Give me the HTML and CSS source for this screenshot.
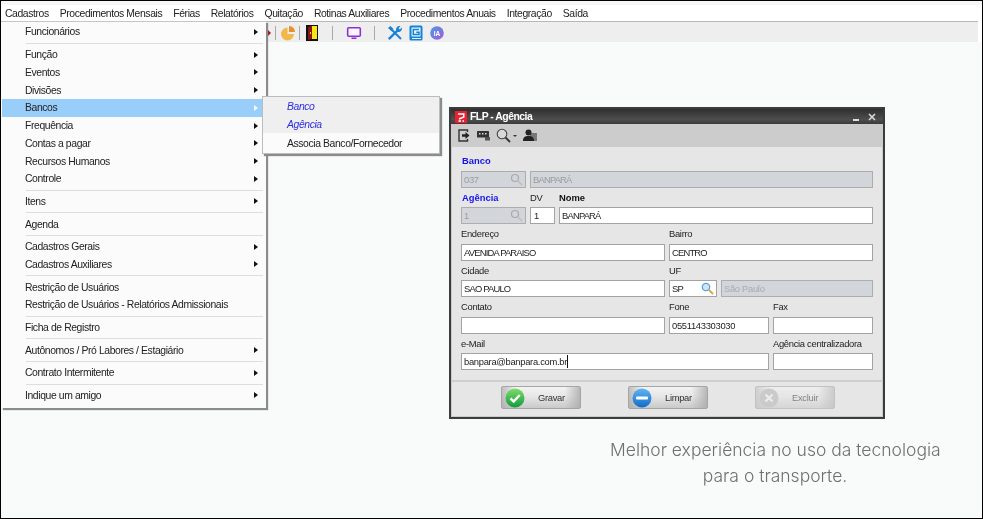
FILE: index.html
```html
<!DOCTYPE html>
<html lang="pt-BR">
<head>
<meta charset="utf-8">
<title>FLP - Agência</title>
<link rel="stylesheet" href="styles.css">
</head>
<body>
<div class="frame">
  <nav class="menubar">
    <span class="mb-item mb-open">Cadastros</span>
    <span class="mb-item">Procedimentos Mensais</span>
    <span class="mb-item">Férias</span>
    <span class="mb-item">Relatórios</span>
    <span class="mb-item">Quitação</span>
    <span class="mb-item">Rotinas Auxiliares</span>
    <span class="mb-item">Procedimentos Anuais</span>
    <span class="mb-item">Integração</span>
    <span class="mb-item">Saída</span>
  </nav>
  <div class="toolbar">
    <svg class="tb tb-arrow" width="6" height="10" viewBox="0 0 6 10"><path d="M0 0l5 5-5 5z" fill="#a01818"/></svg>
    <span class="tb-sep s1"></span>
    <svg class="tb tb-pie" width="16" height="16" viewBox="0 0 16 16"><path d="M7.500 2.500a6.500 6.500 0 1 0 6.500 6.500H7.500z" fill="#f2b84b"/><path d="M9 1a6 6 0 0 1 6 6H9z" fill="#e8912c"/></svg>
    <span class="tb-sep s2"></span>
    <svg class="tb tb-door" width="12" height="16" viewBox="0 0 12 16"><rect width="12" height="16" fill="#111"/><rect x="5" y="1" width="6" height="13" fill="#f7e716"/><path d="M2 2l4-1v13l-4 1z" fill="#8a1616"/><rect x="4" y="7" width="1" height="2" fill="#f7e716"/></svg>
    <span class="tb-sep s3"></span>
    <svg class="tb tb-mon" width="16" height="16" viewBox="0 0 16 16"><rect x="1.700" y="2.700" width="12.600" height="8.600" rx="1" fill="#fbf6ff" stroke="#8e2fd6" stroke-width="1.600"/><rect x="5.500" y="12.500" width="5" height="1.500" fill="#8e2fd6"/></svg>
    <span class="tb-sep s4"></span>
    <svg class="tb tb-tools" width="16" height="16" viewBox="0 0 16 16"><path d="M1.800 14.200L11 5" stroke="#1683d8" stroke-width="2.400" fill="none"/><path d="M14 14L5 5" stroke="#1683d8" stroke-width="2" fill="none"/><path d="M9.200 5.500a3.400 3.400 0 0 1 4.300-4.300l-2 2 1.300 1.300 2-2a3.400 3.400 0 0 1-4.300 4.300zM1 3l2.500-2 3 3-2 2.200z" fill="#1683d8"/></svg>
    <svg class="tb tb-g" width="14" height="16" viewBox="0 0 14 16"><rect x=".5" y=".5" width="13" height="15" rx="1.500" fill="#1483d6"/><rect x="2.500" y="2.500" width="9" height="9" fill="#eaf6fd"/><path d="M10 4.500H4.300v5H10V7.200H7.300" fill="none" stroke="#1483d6" stroke-width="1.500"/><rect x="3" y="13" width="9" height="1" fill="#eaf6fd"/></svg>
    <svg class="tb tb-ia" width="14" height="14" viewBox="0 0 14 14"><defs><linearGradient id="iag" x1="0" y1="0" x2="1" y2="1"><stop offset="0" stop-color="#4a9be0"/><stop offset="1" stop-color="#a35adf"/></linearGradient></defs><circle cx="7" cy="7" r="6.800" fill="url(#iag)"/><text x="7" y="9.700" text-anchor="middle" class="ia-text">IA</text></svg>
  </div>
  <main class="desktop">
    <p class="tagline">Melhor experiência no uso da tecnologia<br>para o transporte.</p>
  </main>

  <div class="menu">
    <div class="mi"><span>Funcionários</span><i class="caret"></i></div>
    <hr class="msep">
    <div class="mi"><span>Função</span><i class="caret"></i></div>
    <div class="mi"><span>Eventos</span><i class="caret"></i></div>
    <div class="mi"><span>Divisões</span><i class="caret"></i></div>
    <div class="mi mi-sel"><span>Bancos</span><i class="caret caret-w"></i></div>
    <div class="mi"><span>Frequência</span><i class="caret"></i></div>
    <div class="mi"><span>Contas a pagar</span><i class="caret"></i></div>
    <div class="mi"><span>Recursos Humanos</span><i class="caret"></i></div>
    <div class="mi"><span>Controle</span><i class="caret"></i></div>
    <hr class="msep">
    <div class="mi"><span>Itens</span><i class="caret"></i></div>
    <hr class="msep">
    <div class="mi"><span>Agenda</span></div>
    <hr class="msep">
    <div class="mi"><span>Cadastros Gerais</span><i class="caret"></i></div>
    <div class="mi"><span>Cadastros Auxiliares</span><i class="caret"></i></div>
    <hr class="msep">
    <div class="mi"><span>Restrição de Usuários</span></div>
    <div class="mi"><span>Restrição de Usuários - Relatórios Admissionais</span></div>
    <hr class="msep">
    <div class="mi"><span>Ficha de Registro</span></div>
    <hr class="msep">
    <div class="mi"><span>Autônomos / Pró Labores / Estagiário</span><i class="caret"></i></div>
    <hr class="msep">
    <div class="mi"><span>Contrato Intermitente</span><i class="caret"></i></div>
    <hr class="msep">
    <div class="mi"><span>Indique um amigo</span><i class="caret"></i></div>
  </div>

  <div class="submenu">
    <div class="si si-top si-em">Banco</div>
    <div class="si si-top si-em">Agência</div>
    <div class="si si-last">Associa Banco/Fornecedor</div>
  </div>

  <section class="dialog">
    <header class="dlg-title">
      <svg class="dlg-logo" width="12" height="12" viewBox="0 0 12 12"><rect width="12" height="12" fill="#e8212f"/><path d="M3 3h5.800v3L4 8" fill="none" stroke="#fff" stroke-width="1.500"/><path d="M3.500 10h2.500M7.500 10H9" fill="none" stroke="#fff" stroke-width="1.400"/></svg>
      <span class="dlg-name">FLP - Agência</span>
      <span class="dlg-min"></span>
      <svg class="dlg-x" width="8" height="8" viewBox="0 0 8 8"><path d="M1 1l6 6M7 1L1 7" stroke="#ddd" stroke-width="1.500"/></svg>
    </header>
    <div class="dlg-tools">
      <svg width="12" height="13" viewBox="0 0 12 13"><path d="M9.500 3V1H1v11h8.500v-2" fill="none" stroke="#333" stroke-width="1.400"/><path d="M4 5.300h3.500V3l4 3.500-4 3.500V7.700H4z" fill="#222"/></svg>
      <svg class="dt-card" width="13" height="11" viewBox="0 0 13 11"><rect y="1" width="12" height="6.500" rx=".5" fill="#333"/><rect x="2" y="3" width="1.500" height="1.500" fill="#ddd"/><rect x="5" y="3" width="1.500" height="1.500" fill="#ddd"/><rect x="8" y="3" width="1.500" height="1.500" fill="#ddd"/><rect x="8" y="7" width="5" height="3.500" fill="#555"/></svg>
      <svg class="dt-lens" width="15" height="15" viewBox="0 0 15 15"><circle cx="6" cy="6" r="4.800" fill="#d8d8d8" stroke="#444" stroke-width="1.100"/><path d="M9.500 9.500l4.500 4.500" stroke="#333" stroke-width="1.800"/></svg>
      <i class="dt-drop"></i>
      <svg class="dt-user" width="14" height="13" viewBox="0 0 14 13"><rect x="7" y="4" width="7" height="8" fill="#777"/><circle cx="5.500" cy="3.500" r="3" fill="#222"/><path d="M0 12c0-4 2-5 5.500-5S11 8 11 12z" fill="#222"/></svg>
    </div>
    <div class="dlg-form">
      <div class="row">
        <div class="field w-code"><label class="lbl lbl-key">Banco</label><div class="inp inp-off"><span>037</span><svg class="lens" width="13" height="13" viewBox="0 0 13 13"><circle cx="5" cy="5" r="3.500" fill="none" stroke="#a9a9a9" stroke-width="1.200"/><path d="M8 8l4 4" stroke="#bbb" stroke-width="1.300"/></svg></div></div>
        <div class="field w-fill"><label class="lbl">&nbsp;</label><div class="inp inp-off"><span class="cap">BANPARÁ</span></div></div>
      </div>
      <div class="row">
        <div class="field w-code"><label class="lbl lbl-key">Agência</label><div class="inp inp-off"><span>1</span><svg class="lens" width="13" height="13" viewBox="0 0 13 13"><circle cx="5" cy="5" r="3.500" fill="none" stroke="#a9a9a9" stroke-width="1.200"/><path d="M8 8l4 4" stroke="#bbb" stroke-width="1.300"/></svg></div></div>
        <div class="field w-dv"><label class="lbl">DV</label><div class="inp inp-c"><span>1</span></div></div>
        <div class="field w-nome"><label class="lbl lbl-req">Nome</label><div class="inp"><span class="cap">BANPARÁ</span></div></div>
      </div>
      <div class="row">
        <div class="field w-half"><label class="lbl">Endereço</label><div class="inp"><span class="cap">AVENIDA PARAISO</span></div></div>
        <div class="field w-fill"><label class="lbl">Bairro</label><div class="inp"><span class="cap">CENTRO</span></div></div>
      </div>
      <div class="row">
        <div class="field w-half"><label class="lbl">Cidade</label><div class="inp"><span class="cap">SAO PAULO</span></div></div>
        <div class="field w-uf"><label class="lbl">UF</label><div class="inp"><span class="cap">SP</span><svg class="lens" width="13" height="13" viewBox="0 0 13 13"><circle cx="5" cy="5" r="3.700" fill="#cfe6fa" stroke="#5fa0dc" stroke-width="1.300"/><path d="M8 8l4 4" stroke="#d9a641" stroke-width="1.800"/></svg></div></div>
        <div class="field w-fill"><label class="lbl">&nbsp;</label><div class="inp inp-off inp-soft"><span>São Paulo</span></div></div>
      </div>
      <div class="row">
        <div class="field w-half"><label class="lbl">Contato</label><div class="inp"></div></div>
        <div class="field w-fone"><label class="lbl">Fone</label><div class="inp"><span>0551143303030</span></div></div>
        <div class="field w-fill"><label class="lbl">Fax</label><div class="inp"></div></div>
      </div>
      <div class="row">
        <div class="field w-mail"><label class="lbl">e-Mail</label><div class="inp"><span class="caret-text">banpara@banpara.com.br</span></div></div>
        <div class="field w-fill"><label class="lbl">Agência centralizadora</label><div class="inp"></div></div>
      </div>
    </div>
    <footer class="dlg-foot">
      <div class="btn">
        <svg class="btn-ic" width="20" height="20" viewBox="0 0 20 20"><defs><linearGradient id="gr" x1="0" y1="0" x2="0" y2="1"><stop offset="0" stop-color="#7fdd6a"/><stop offset="1" stop-color="#109c3c"/></linearGradient></defs><circle cx="10" cy="10" r="9.500" fill="url(#gr)"/><path d="M5.500 10.500l3.200 3 6-6.500" fill="none" stroke="#fff" stroke-width="2.400"/></svg>
        <span class="btn-t">Gravar</span>
      </div>
      <div class="btn">
        <svg class="btn-ic" width="20" height="20" viewBox="0 0 20 20"><defs><linearGradient id="bl" x1="0" y1="0" x2="0" y2="1"><stop offset="0" stop-color="#62b4f2"/><stop offset="1" stop-color="#0f6cc9"/></linearGradient></defs><circle cx="10" cy="10" r="9.500" fill="url(#bl)"/><rect x="4" y="8.500" width="12" height="3" rx="1" fill="#fff"/></svg>
        <span class="btn-t">Limpar</span>
      </div>
      <div class="btn btn-off">
        <svg class="btn-ic" width="20" height="20" viewBox="0 0 20 20"><circle cx="10" cy="10" r="9.500" fill="#b4b4b4"/><path d="M6.500 6.500l7 7M13.500 6.500l-7 7" stroke="#f0f0f0" stroke-width="2.400"/></svg>
        <span class="btn-t">Excluir</span>
      </div>
    </footer>
  </section>
</div>
</body>
</html>
```
FILE: styles.css
```css
* { box-sizing: border-box; }
html, body { margin: 0; padding: 0; }
body {
  width: 983px;
  height: 519px;
  overflow: hidden;
  background: #fff;
  font-family: "Liberation Sans", "DejaVu Sans", sans-serif;
  font-size: 10.400px;
  letter-spacing: -.4px;
  color: #222;
}
.frame {
  position: relative;
  width: 983px;
  height: 519px;
  border: 1px solid #000;
  display: flex;
  flex-direction: column;
  background: #fff;
  filter: blur(.35px);
}
.menubar {
  height: 20px;
  flex: none;
  display: flex;
  align-items: center;
  gap: 11px;
  padding: 5px 0 0 4px;
  background: linear-gradient(#f7f7f7 0, #f7f7f7 4px, #fff 4px);
}
.mb-item { white-space: nowrap; }
.toolbar {
  flex: none;
  height: 21px;
  margin-right: 4px;
  padding-top: 1px;
  background: #eeeeee;
  border-top: 1px solid #b8b8b8;
  display: flex;
  align-items: center;
}
.tb { flex: none; }
.tb-arrow { margin-left: 265px; }
.tb-sep { flex: none; width: 1px; height: 14px; background: #a9a9a9; }
.s1 { margin-left: 3px; }
.s2 { margin-left: 3px; }
.s3 { margin-left: 14px; }
.s4 { margin-left: 12px; }
.tb-pie { margin-left: 4px; }
.tb-door { margin-left: 6px; }
.tb-mon { margin-left: 13px; }
.tb-tools { margin-left: 12px; }
.tb-g { margin-left: 6px; }
.tb-ia { margin-left: 7px; }
.ia-text { font: 700 6.500px "Liberation Sans", sans-serif; letter-spacing: 0; fill: #fff; }
.desktop {
  flex: 1;
  background: #f9fbfa;
  display: flex;
  flex-direction: column;
  align-items: flex-end;
  justify-content: flex-end;
  padding: 0 42px 29px 0;
}
.tagline {
  margin: 0;
  width: 330px;
  text-align: center;
  font-family: "Inter", "Open Sans", sans-serif;
  font-size: 17.500px;
  font-weight: 300;
  letter-spacing: 0;
  line-height: 26px;
  color: #6f6f6f;
  white-space: nowrap;
}

/* dropdown */
.menu {
  position: absolute;
  left: 0;
  top: 20px;
  width: 265px;
  height: 387px;
  padding: 1px 3px 0 1px;
  background: #fbfbfb;
  border-top: 1px solid #c6c6c6;
  box-shadow: 2px 2px 1px #8c8c8c;
}
.mi {
  height: 17.750px;
  display: flex;
  align-items: center;
  padding: 0 5px 0 23px;
  white-space: nowrap;
}
.mi-sel { background: #99cdfa; }
.caret {
  margin-left: auto;
  width: 0;
  height: 0;
  border-style: solid;
  border-width: 3.500px 0 3.500px 4px;
  border-color: transparent transparent transparent #111;
}
.caret-w { border-left-color: #f5f9fd; }
.msep {
  height: 4.900px;
  margin: 0 0 0 24px;
  border: 0;
  background: linear-gradient(#fbfbfb 2px, #dedede 2px, #dedede 3px, #fbfbfb 3px);
}

/* submenu */
.submenu {
  position: absolute;
  left: 261px;
  top: 95px;
  width: 178px;
  height: 58px;
  background: #fbfbfb;
  border: 1px solid #bcbcbc;
  box-shadow: 2px 2px 1px #8c8c8c;
}
.si {
  height: 18px;
  padding-left: 24px;
  display: flex;
  align-items: center;
  white-space: nowrap;
}
.si-top { background: #efefef; }
.si-em { color: #2f2fe0; font-style: italic; }
.si-last { height: 20px; padding-top: 1px; }

/* dialog */
.dialog {
  position: absolute;
  left: 448px;
  top: 106px;
  width: 436px;
  height: 312px;
  font-size: 9.400px;
  letter-spacing: -.3px;
  background: #e6e6e6;
  border: 2px solid #3c3c3c;
  display: flex;
  flex-direction: column;
  box-shadow: inset 0 0 0 1px #c9c9c9;
}
.dlg-title {
  flex: none;
  height: 15px;
  background: linear-gradient(#2f2f2f, #4e4e4e 70%, #3a3a3a);
  display: flex;
  align-items: center;
  padding: 0 7px 0 4px;
  color: #fff;
}
.dlg-logo { flex: none; }
.dlg-name { margin-left: 3px; font-weight: 700; font-size: 10.400px; letter-spacing: -.5px; }
.dlg-min { margin-left: auto; width: 6px; height: 2px; background: #ddd; margin-top: 6px; }
.dlg-x { margin-left: 9px; }
.dlg-tools {
  flex: none;
  height: 23px;
  background: #cccccc;
  display: flex;
  align-items: center;
  padding-left: 7px;
}
.dt-card { margin-left: 7px; }
.dt-lens { margin-left: 6px; }
.dt-drop {
  margin-left: 2px;
  width: 0;
  height: 0;
  border-style: solid;
  border-width: 2.500px 2.500px 0;
  border-color: #333 transparent transparent;
}
.dt-user { margin-left: 6px; }
.dlg-form {
  flex: none;
  height: 235px;
  padding: 4px 10px 0 10px;
  display: flex;
  flex-direction: column;
  border-bottom: 2px solid #cfcfcf;
}
.row { display: flex; gap: 4px; height: 36.500px; flex: none; }
.field { display: flex; flex-direction: column; }
.lbl {
  height: 19.500px;
  display: flex;
  align-items: center;
  white-space: nowrap;
  color: #222;
}
.lbl-key { color: #1414ee; font-weight: 700; padding-left: 1px; letter-spacing: 0; }
.lbl-req { color: #111; font-weight: 700; letter-spacing: 0; }
.inp {
  height: 17px;
  background: #fff;
  border: 1px solid #a3a3a3;
  display: flex;
  align-items: center;
  padding: 0 2px;
  color: #222;
  white-space: nowrap;
  overflow: hidden;
}
.cap { letter-spacing: -.8px; }
.inp-c { padding-left: 3px; }
.inp-off { background: #d2d5da; color: #9a9ca0; border-color: #adadad; }
.inp-soft { color: #a9abb0; }
.lens { margin-left: auto; flex: none; }
.caret-text { border-right: 1px solid #111; line-height: 13px; }
.w-code { width: 65px; }
.w-dv { width: 25px; }
.w-nome { width: 314px; }
.w-half { width: 204px; }
.w-uf { width: 48px; }
.w-fone { width: 100px; }
.w-mail { width: 308px; }
.w-fill { flex: 1; min-width: 0; }
.dlg-foot {
  flex: 1;
  display: flex;
  padding: 4px 0 0 50px;
  gap: 47px;
}
.btn {
  width: 80px;
  height: 23px;
  display: flex;
  align-items: center;
  border: 1px solid #a5a5a5;
  border-radius: 2px;
  background:
    linear-gradient(90deg, rgba(170,170,170,.7), rgba(255,255,255,0) 18%, rgba(255,255,255,0) 80%, rgba(170,170,170,.8)),
    linear-gradient(#f3f3f3, #e6e6e6 45%, #c9c9c9);
}
.btn-ic { margin-left: 3px; flex: none; }
.btn-t { margin-left: 13px; color: #333; }
.btn-off { opacity: .55; }
```
